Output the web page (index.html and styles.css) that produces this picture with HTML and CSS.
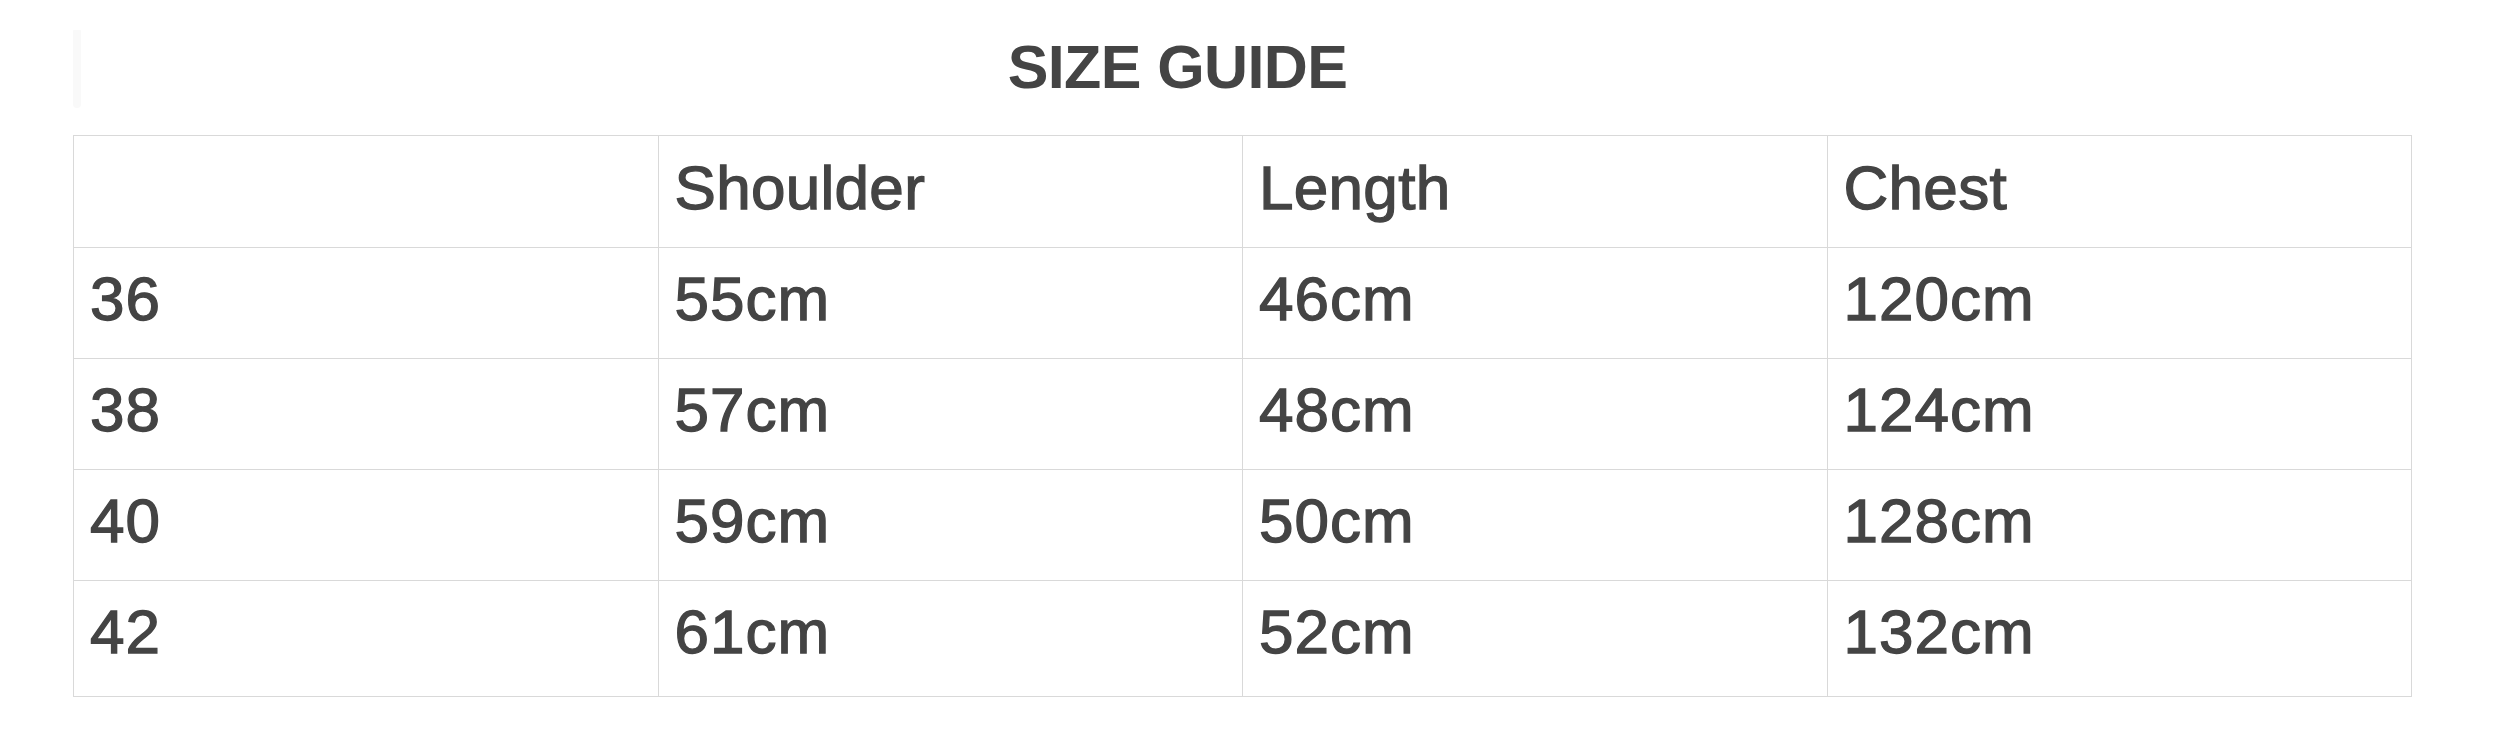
FILE: index.html
```html
<!DOCTYPE html>
<html lang="en">
<head>
<meta charset="utf-8">
<title>Size Guide</title>
<link rel="stylesheet" href="styles.css">
</head>
<body>
<div class="page">
  <div class="header">
    <div class="ghost"></div>
    <h1 class="title">SIZE GUIDE</h1>
  </div>
  <table class="sizes">
    <thead>
      <tr><th></th><th>Shoulder</th><th>Length</th><th>Chest</th></tr>
    </thead>
    <tbody>
      <tr><td>36</td><td>55cm</td><td>46cm</td><td>120cm</td></tr>
      <tr><td>38</td><td>57cm</td><td>48cm</td><td>124cm</td></tr>
      <tr><td>40</td><td>59cm</td><td>50cm</td><td>128cm</td></tr>
      <tr class="last"><td>42</td><td>61cm</td><td>52cm</td><td>132cm</td></tr>
    </tbody>
  </table>
</div>
</body>
</html>
```
FILE: styles.css
```css
html, body {
  margin: 0;
  padding: 0;
  background: #ffffff;
}
body {
  font-family: "Liberation Sans", Arial, sans-serif;
  color: #444444;
}
.page {
  padding: 0 86px 0 73px;
}
.header {
  display: flex;
  align-items: flex-start;
  height: 135px;
}
.ghost {
  width: 8px;
  height: 78px;
  margin-top: 30px;
  background: #f9f9f9;
  border-radius: 1px 1px 5px 5px;
}
.title {
  flex: 1;
  margin: 0;
  padding-right: 138px;
  text-align: center;
  font-size: 61px;
  line-height: 135px;
  font-weight: 700;
  letter-spacing: -0.6px;
  color: #444444;
}
.sizes {
  width: 100%;
  table-layout: fixed;
  border-collapse: collapse;
  border: 1px solid #d6d6d6;
}
.sizes th,
.sizes td {
  border: 1px solid #d9d9d9;
  text-align: left;
  font-weight: 400;
  font-size: 62px;
  line-height: 74px;
  padding: 14px 16px 22px 16px;
  color: #444444;
  -webkit-text-stroke: 1.3px #444444;
}
.sizes td {
  letter-spacing: 1px;
}
.sizes th {
  padding-top: 15px;
  padding-bottom: 22px;
  letter-spacing: 0.3px;
}
.sizes .last td {
  padding-bottom: 27px;
}
```
